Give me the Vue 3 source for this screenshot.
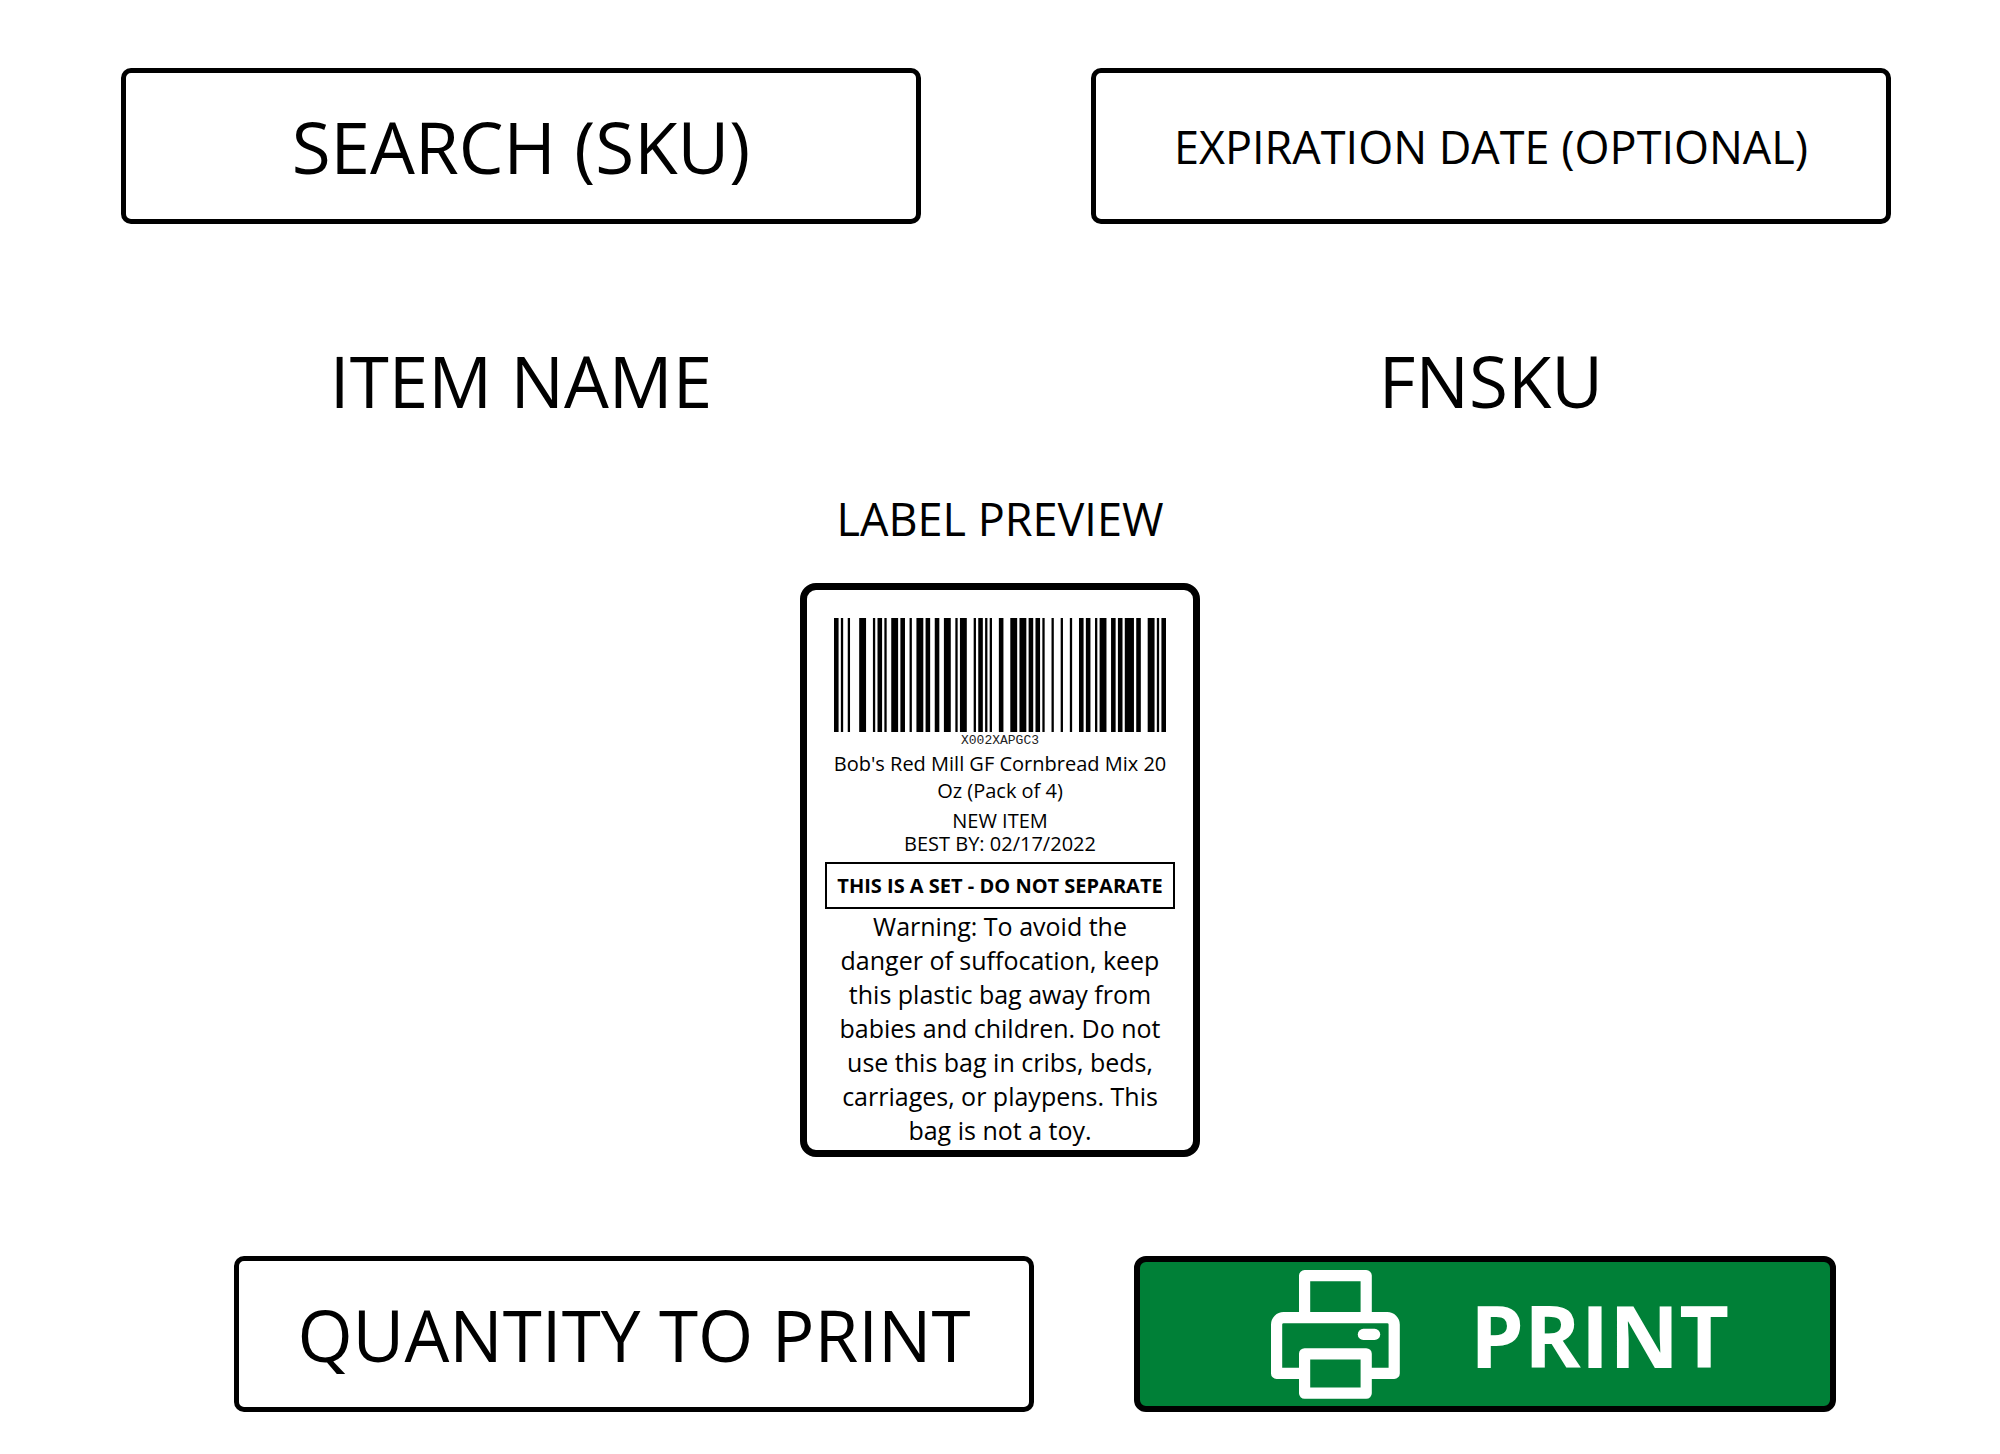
<script setup>
import { ref } from 'vue'

const sku = ref('')
const expiration = ref('')
const quantity = ref('')

const code = 'X002XAPGC3'

// Code 128 (set B): bar and space widths in modules, one group per symbol
const symbols = [
  '211214', '331121', '123122', '123122', '223211', '331121', '111323',
  '313121', '211313', '131321', '221132', '212141', '2331112',
]

const bars = []
let cursor = 0
symbols.join('').split('').forEach((digit, index) => {
  const width = Number(digit)
  if (index % 2 === 0) bars.push({ x: cursor, width })
  cursor += width
})
const modules = cursor

function printLabels() {
  window.print()
}
</script>

<template>
  <main class="page">
    <section class="columns">
      <input v-model="sku" class="field" type="text" aria-label="Search (SKU)" placeholder="SEARCH (SKU)" />
      <input
        v-model="expiration"
        class="field field-small"
        type="text"
        aria-label="Expiration date (optional)"
        placeholder="EXPIRATION DATE (OPTIONAL)"
      />
    </section>

    <section class="columns details">
      <h2 class="detail">ITEM NAME</h2>
      <h2 class="detail">FNSKU</h2>
    </section>

    <section class="preview">
      <h3 class="preview-title">LABEL PREVIEW</h3>
      <article class="label">
        <svg class="barcode" :viewBox="`0 0 ${modules} 50`" preserveAspectRatio="none" role="img" aria-label="Barcode">
          <rect v-for="bar in bars" :key="bar.x" :x="bar.x" y="0" :width="bar.width" height="50" />
        </svg>
        <p class="code">{{ code }}</p>
        <p class="product">Bob's Red Mill GF Cornbread Mix 20 Oz (Pack of 4)</p>
        <p class="condition">NEW ITEM<br />BEST BY: 02/17/2022</p>
        <p class="set-notice">THIS IS A SET - DO NOT SEPARATE</p>
        <p class="warning">
          Warning: To avoid the danger of suffocation, keep this plastic bag away from babies and
          children. Do not use this bag in cribs, beds, carriages, or playpens. This bag is not a toy.
        </p>
      </article>
    </section>

    <section class="actions">
      <input v-model="quantity" class="field" type="text" aria-label="Quantity to print" placeholder="QUANTITY TO PRINT" />
      <button class="print" type="button" @click="printLabels">
        <svg class="print-icon" viewBox="0 0 129 129" aria-hidden="true">
          <g fill="none" stroke="#fff" stroke-width="11.2" stroke-linejoin="round">
            <path d="M33.6 47.6V5.6H95.2V47.6" />
            <path d="M33.6 103.4H5.6V54.6a7 7 0 0 1 7-7H116.2a7 7 0 0 1 7 7V103.4H95.2" />
            <path d="M33.6 83.8H95.2V123.2H33.6Z" />
            <path d="M92.4 64.4H103.6" stroke-linecap="round" />
          </g>
        </svg>
        <span>PRINT</span>
      </button>
    </section>
  </main>
</template>

<style>
body {
  margin: 0;
  background: #fff;
}
</style>

<style scoped>
.page {
  box-sizing: border-box;
  padding: 68px 0 42px;
  color: #000;
  font-family: "Open Sans", "Noto Sans", sans-serif;
}

.page * {
  box-sizing: border-box;
}

h2,
h3,
p {
  margin: 0;
  font-weight: 400;
}

.columns {
  display: grid;
  grid-template-columns: 1fr 1fr;
  gap: 170px;
  padding: 0 109px 0 121px;
}

.field {
  width: 100%;
  min-width: 0;
  height: 156px;
  padding: 0 20px;
  border: 5px solid #000;
  border-radius: 10px;
  background: #fff;
  color: #000;
  font: inherit;
  font-size: 71px;
  text-align: center;
  outline: none;
}

.field::placeholder {
  color: #000;
  opacity: 1;
}

.field-small {
  font-size: 45px;
}

.details {
  margin-top: 109px;
}

.detail {
  font-size: 71px;
  line-height: 96px;
  text-align: center;
}

.preview {
  display: flex;
  flex-direction: column;
  align-items: center;
  margin-top: 59px;
}

.preview-title {
  font-size: 45px;
  line-height: 62px;
}

.label {
  display: flex;
  flex-direction: column;
  width: 400px;
  margin-top: 33px;
  padding: 28px 18px 3px;
  border: 7px solid #000;
  border-radius: 16px;
  text-align: center;
}

.barcode {
  display: block;
  width: 332px;
  height: 114px;
  margin: 0 auto;
}

.code {
  color: #222;
  font-family: "Liberation Mono", monospace;
  font-size: 13px;
  line-height: 18px;
}

.product {
  font-size: 20px;
  line-height: 27px;
}

.condition {
  margin-top: 5px;
  font-size: 20px;
  line-height: 23px;
}

.set-notice {
  margin-top: 7px;
  border: 2px solid #000;
  font-size: 20px;
  font-weight: 700;
  line-height: 43px;
  white-space: nowrap;
}

.warning {
  padding: 0 8px;
  font-size: 25px;
  line-height: 34px;
}

.actions {
  display: grid;
  grid-template-columns: 800fr 702fr;
  gap: 100px;
  margin-top: 99px;
  padding: 0 164px 0 234px;
}

.print {
  display: flex;
  align-items: center;
  gap: 70px;
  min-width: 0;
  height: 156px;
  padding: 0 0 0 131px;
  border: 6px solid #000;
  border-radius: 12px;
  background: #008037;
  color: #fff;
  font: inherit;
  font-size: 86px;
  font-weight: 700;
  line-height: 117px;
  cursor: pointer;
}

.print-icon {
  flex: none;
  width: 129px;
  height: 129px;
}
</style>
